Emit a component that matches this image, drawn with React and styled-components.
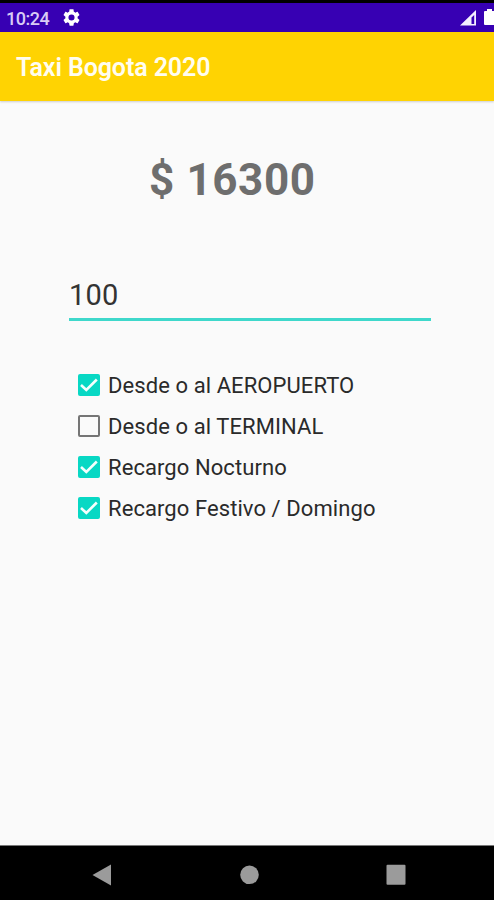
import React, { useState } from "react";
import styled, { createGlobalStyle } from "styled-components";

const surcharges = [
  { id: "airport", label: "Desde o al AEROPUERTO", active: true },
  { id: "terminal", label: "Desde o al TERMINAL", active: false },
  { id: "night", label: "Recargo Nocturno", active: true },
  { id: "holiday", label: "Recargo Festivo / Domingo", active: true },
];

function App() {
  const [options, setOptions] = useState(surcharges);

  const toggle = (id) =>
    setOptions(
      options.map((o) => (o.id === id ? { ...o, active: !o.active } : o))
    );

  return (
    <Screen>
      <GlobalStyle />
      <StatusBar>
        <Clock>10:24</Clock>
        <GearIcon viewBox="2 2 20 20">
          <path d="M19.14 12.94c.04-.3.06-.61.06-.94 0-.32-.02-.64-.07-.94l2.03-1.58c.18-.14.23-.41.12-.61l-1.92-3.32c-.12-.22-.37-.29-.59-.22l-2.39.96c-.5-.38-1.03-.7-1.62-.94l-.36-2.54c-.04-.24-.24-.41-.48-.41h-3.84c-.24 0-.43.17-.47.41l-.36 2.54c-.59.24-1.13.57-1.62.94l-2.39-.96c-.22-.08-.47 0-.59.22L2.74 8.87c-.12.21-.08.47.12.61l2.03 1.58c-.05.3-.09.63-.09.94s.02.64.07.94l-2.03 1.58c-.18.14-.23.41-.12.61l1.92 3.32c.12.22.37.29.59.22l2.39-.96c.5.38 1.03.7 1.62.94l.36 2.54c.05.24.24.41.48.41h3.84c.24 0 .44-.17.47-.41l.36-2.54c.59-.24 1.13-.56 1.62-.94l2.39.96c.22.08.47 0 .59-.22l1.92-3.32c.12-.22.07-.47-.12-.61zM12 15.6a3.6 3.6 0 1 1 0-7.2 3.6 3.6 0 0 1 0 7.2z" />
        </GearIcon>
        <SignalIcon viewBox="0 0 17 17">
          <path
            fillRule="evenodd"
            d="M0 15.5 16 0V15.5zM11.5 7.5V14H14.2V5z"
          />
        </SignalIcon>
        <BatteryIcon viewBox="0 0 10 17">
          <path d="M1 2H3V0H8V2H10V16H1Q0 16 0 15V3Q0 2 1 2z" />
        </BatteryIcon>
      </StatusBar>
      <AppBar>
        <Title>Taxi Bogota 2020</Title>
      </AppBar>
      <Content>
        <Price>$ 16300</Price>
        <Units>100</Units>
        <Options>
          {options.map((o) => (
            <Option
              key={o.id}
              role="checkbox"
              aria-checked={o.active}
              onClick={() => toggle(o.id)}
            >
              <Box $checked={o.active}>
                {o.active && (
                  <Tick viewBox="0 0 22 22">
                    <path d="M3 11 8.3 16 18.8 5.5" />
                  </Tick>
                )}
              </Box>
              <Label>{o.label}</Label>
            </Option>
          ))}
        </Options>
      </Content>
      <NavBar>
        <NavIcon viewBox="0 0 24 24">
          <path d="M2.5 12 21 1.5V22.5z" />
        </NavIcon>
        <NavIcon viewBox="0 0 24 24">
          <circle cx="12.5" cy="11.8" r="9.3" />
        </NavIcon>
        <NavIcon viewBox="0 0 24 24">
          <rect x="2.5" y="1.8" width="19" height="20" rx="1" />
        </NavIcon>
      </NavBar>
    </Screen>
  );
}

export default App;

const GlobalStyle = createGlobalStyle`
  body {
    margin: 0;
    background: #fafafa;
    font-family: Roboto, sans-serif;
  }

  * {
    box-sizing: border-box;
  }
`;

const Screen = styled.div`
  width: 494px;
  height: 900px;
  display: flex;
  flex-direction: column;
  overflow: hidden;
  background: #fafafa;
`;

const StatusBar = styled.header`
  height: 32px;
  flex: none;
  display: flex;
  align-items: flex-start;
  border-top: 3px solid #000;
  background: #3700b3;
`;

const Clock = styled.span`
  width: 57px;
  padding-left: 6px;
  margin-top: 5px;
  color: #d9ccf5;
  font-size: 18px;
  font-weight: 500;
  line-height: 21px;
  letter-spacing: -0.5px;
`;

const GearIcon = styled.svg`
  width: 17px;
  height: 17px;
  margin: 6px 0 0 6px;
  fill: #fff;
`;

const SignalIcon = styled.svg`
  width: 17px;
  height: 17px;
  margin: 7px 7px 0 auto;
  fill: #f4efff;
`;

const BatteryIcon = styled.svg`
  width: 10px;
  height: 17px;
  margin-top: 6px;
  fill: #fff;
`;

const AppBar = styled.div`
  height: 69px;
  flex: none;
  display: flex;
  align-items: center;
  padding: 3px 16px 0;
  background: #ffd302;
  box-shadow: 0 1px 2px rgba(0, 0, 0, 0.18);
`;

const Title = styled.h1`
  margin: 0;
  color: #fffdf0;
  font-size: 25px;
  font-weight: 600;
  line-height: 28px;
  letter-spacing: -0.1px;
`;

const Content = styled.main`
  flex: 1;
  display: flex;
  flex-direction: column;
  align-items: flex-start;
  padding: 53px 63px 0 69px;
`;

const Price = styled.div`
  margin-left: 80px;
  color: #6e6e6e;
  font-size: 44px;
  font-weight: 700;
  line-height: 52px;
  letter-spacing: 0.6px;
  white-space: nowrap;
`;

const Units = styled.div`
  width: 362px;
  height: 53px;
  margin-top: 62px;
  border-bottom: 3px solid #3fd8cb;
  color: #333;
  font-size: 29px;
  line-height: 54px;
  letter-spacing: 0.2px;
`;

const Options = styled.div`
  display: flex;
  flex-direction: column;
  margin-top: 43px;
  padding-left: 9px;
`;

const Option = styled.div`
  height: 41px;
  display: flex;
  align-items: center;
  gap: 8px;
  cursor: pointer;
`;

const Box = styled.span`
  width: 22px;
  height: 22px;
  flex: none;
  display: flex;
  border: 2px solid ${(props) => (props.$checked ? "#08d8c4" : "#757575")};
  border-radius: 2px;
  background: ${(props) => (props.$checked ? "#08d8c4" : "transparent")};
`;

const Tick = styled.svg`
  width: 22px;
  height: 22px;
  flex: none;
  margin: -2px;
  fill: none;
  stroke: #f4fffd;
  stroke-width: 2.6;
`;

const Label = styled.span`
  padding-top: 2px;
  color: #2a2a2a;
  font-size: 22px;
  line-height: 26px;
  letter-spacing: 0.08px;
  white-space: nowrap;
`;

const NavBar = styled.nav`
  height: 55px;
  flex: none;
  display: flex;
  align-items: center;
  justify-content: space-between;
  padding: 3px 86px 0 90px;
  border-top: 1px solid #777;
  background: #000;
`;

const NavIcon = styled.svg`
  width: 24px;
  height: 24px;
  fill: #9b9b9b;
`;
